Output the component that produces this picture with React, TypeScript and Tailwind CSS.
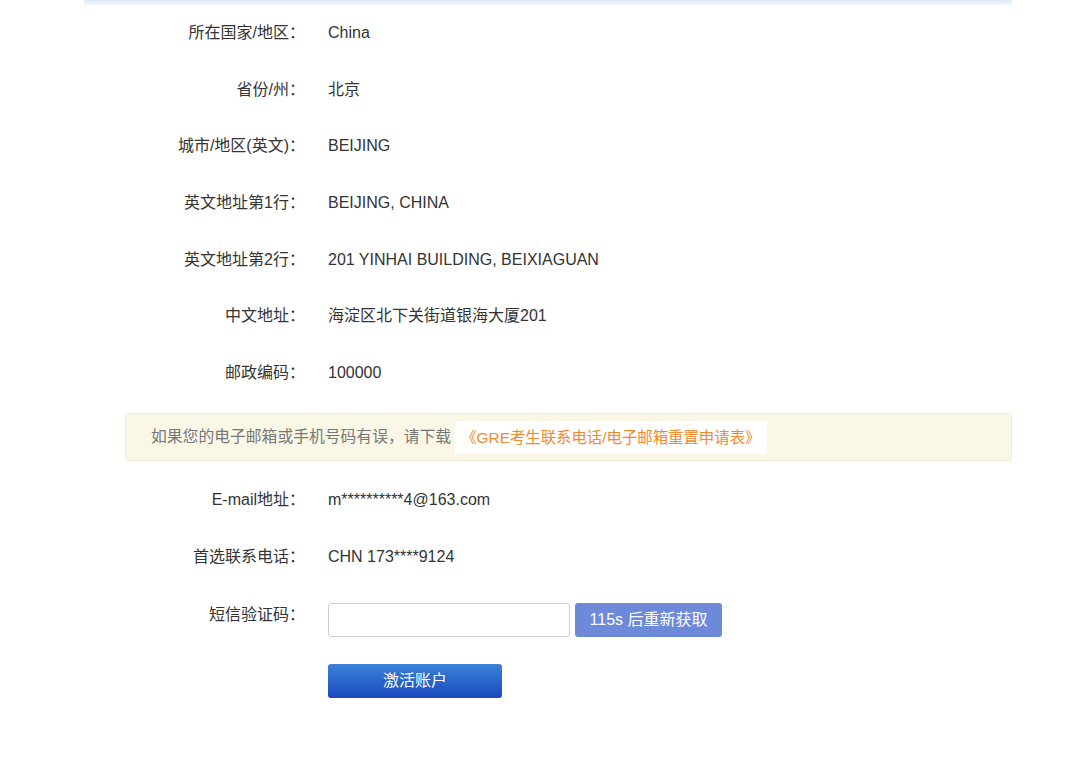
const font = { fontFamily: '"Liberation Sans", "Noto Sans CJK SC", sans-serif' };

const info = [
  { label: "所在国家/地区：", value: "China" },
  { label: "省份/州：", value: "北京" },
  { label: "城市/地区(英文)：", value: "BEIJING" },
  { label: "英文地址第1行：", value: "BEIJING, CHINA" },
  { label: "英文地址第2行：", value: "201 YINHAI BUILDING, BEIXIAGUAN" },
  { label: "中文地址：", value: "海淀区北下关街道银海大厦201" },
  { label: "邮政编码：", value: "100000" },
];

function Row({ label, value }: { label: string; value: string }) {
  return (
    <div className="flex h-[56.6px] items-center">
      <div className="w-[221px] shrink-0 text-right">{label}</div>
      <div className="ml-[23px]">{value}</div>
    </div>
  );
}

export default function App() {
  return (
    <div className="min-h-[781px] bg-white text-[16px] text-[#333]" style={font}>
      <div className="ml-[84px] w-[928px]">
        {/* top strip */}
        <div className="h-[5px] bg-gradient-to-b from-[#dfeaf7] to-[#eef5fc]" />

        <div>
          {info.map((r) => (
            <Row key={r.label} label={r.label} value={r.value} />
          ))}
        </div>

        {/* notice */}
        <div className="ml-[41px] mt-[12px] flex h-[48px] items-center rounded-[3px] border border-[#f1ebd2] bg-[#faf7e7] pl-[25px] text-[15.8px] text-[#777]">
          <span>如果您的电子邮箱或手机号码有误，请下载</span>
          <span className="ml-[4px] bg-white py-[5px] pl-[6px] pr-[7px] text-[15.4px] text-[#f0892e]">
            《GRE考生联系电话/电子邮箱重置申请表》
          </span>
        </div>

        <div className="mt-[11px]">
          <Row label="E-mail地址：" value="m**********4@163.com" />
          <Row label="首选联系电话：" value="CHN 173****9124" />
        </div>

        {/* sms code */}
        <div className="mt-[18px] flex">
          <div className="w-[221px] shrink-0 text-right">短信验证码：</div>
          <div className="ml-[23px] flex gap-[5px]">
            <input
              className="h-[34px] w-[242px] rounded-[3px] border border-[#cfcfcf] bg-white px-2 outline-none"
              type="text"
            />
            <button className="h-[34px] w-[147px] rounded-[3px] bg-[#6d8ada] text-white">115s 后重新获取</button>
          </div>
        </div>

        <div className="ml-[244px] mt-[27px]">
          <button className="h-[34px] w-[174px] rounded-[3px] bg-gradient-to-b from-[#3d82d6] to-[#1b47be] text-white">
            激活账户
          </button>
        </div>
      </div>
    </div>
  );
}
